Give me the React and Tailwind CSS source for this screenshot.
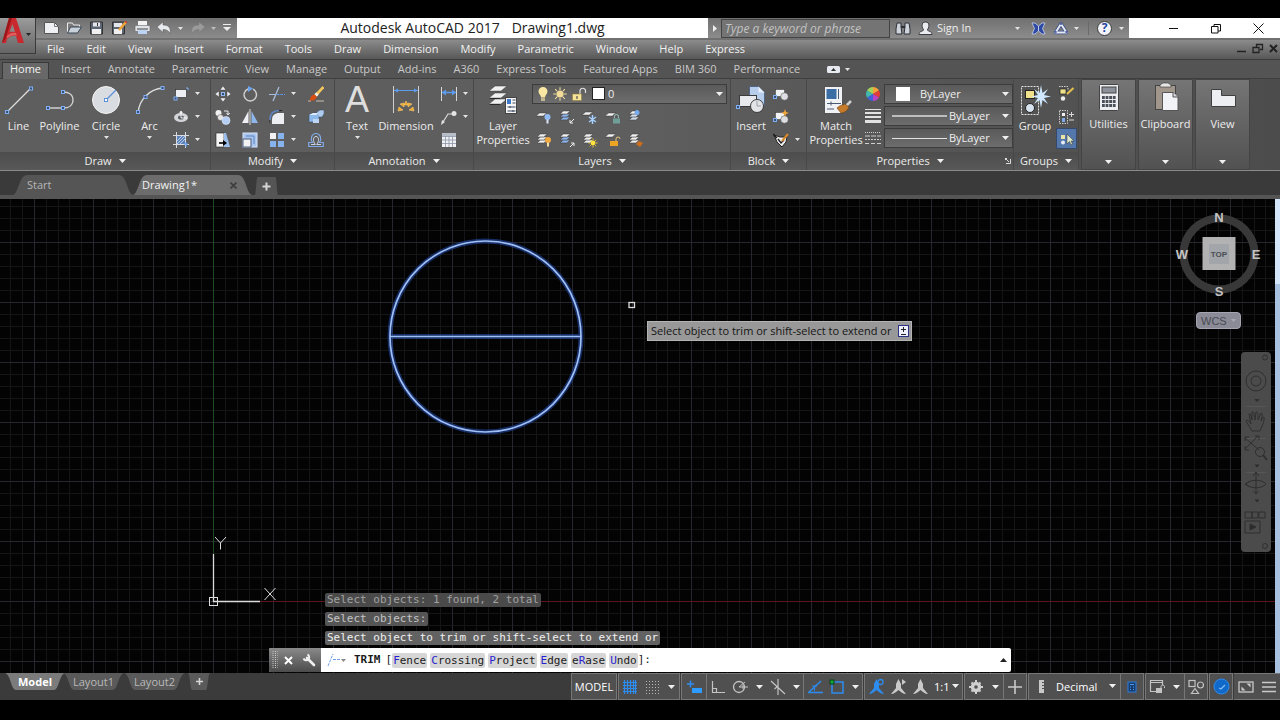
import React from 'react';

const MENUS = ['File', 'Edit', 'View', 'Insert', 'Format', 'Tools', 'Draw', 'Dimension', 'Modify', 'Parametric', 'Window', 'Help', 'Express'];
const RIBBON_TABS = ['Insert', 'Annotate', 'Parametric', 'View', 'Manage', 'Output', 'Add-ins', 'A360', 'Express Tools', 'Featured Apps', 'BIM 360', 'Performance'];
const HISTORY = [
    { text: 'Select objects: 1 found, 2 total', tone: 'bg-[#4a4a4a] text-[#a2a2a2]' },
    { text: 'Select objects:', tone: 'bg-[#555555] text-[#c4c4c4]' },
    { text: 'Select object to trim or shift-select to extend or', tone: 'bg-[#626262] text-[#f0f0f0]' },
];
const TRIM_OPTIONS = [
    ['', 'F', 'ence'],
    ['', 'C', 'rossing'],
    ['', 'P', 'roject'],
    ['', 'E', 'dge'],
    ['e', 'R', 'ase'],
    ['', 'U', 'ndo'],
];

const Svg = ({ w = 16, h = 16, children, className = '' }) => (
    <svg width={w} height={h} viewBox={`0 0 ${w} ${h}`} fill="none" className={`shrink-0 ${className}`} aria-hidden="true">
        {children}
    </svg>
);

const Caret = ({ className = '', fill = '#f0f0f0' }) => (
    <Svg w={7} h={4} className={className}>
        <path d="M0 0h7L3.5 4z" fill={fill} />
    </Svg>
);

const SmallCaret = ({ className = '', fill = '#e4e4e4' }) => (
    <Svg w={5} h={3} className={className}>
        <path d="M0 0h5L2.5 3z" fill={fill} />
    </Svg>
);

// Blue grip square shown on geometry icons
const Grip = ({ x, y }) => <rect x={x - 1.5} y={y - 1.5} width="3" height="3" fill="#3c4f6e" stroke="#7fb0f5" />;

// One sheet of the layer stack
const Sheet = ({ x = 0, y = 0, s = 1, fill = '#f1f1f1' }) => (
    <path d={`M${x + 4 * s} ${y}h${8 * s}l${-4 * s} ${3.4 * s}h${-8 * s}z`} fill={fill} stroke="#3a3a3a" strokeWidth=".5" />
);

const Stack = ({ fill }) => (
    <>
        <Sheet x={1} y={8} s={0.85} fill={fill} />
        <Sheet x={1} y={5} s={0.85} fill={fill} />
        <Sheet x={1} y={2} s={0.85} />
    </>
);

/* ---- draw ---- */
const LineIcon = () => (
    <Svg w={32} h={32}>
        <path d="M4 28 28 4" stroke="#dcdcdc" strokeWidth="1.3" />
        <Grip x={4} y={28} />
        <Grip x={28} y={4.5} />
    </Svg>
);
const PolylineIcon = () => (
    <Svg w={32} h={32}>
        <path d="M4 24h15c6 0 10-3 10-8s-4-8-10-8" stroke="#d0d0d0" strokeWidth="1.3" />
        <Grip x={4} y={24} />
        <Grip x={19} y={24} />
        <Grip x={19} y={8} />
    </Svg>
);
const CircleIcon = () => (
    <Svg w={32} h={32}>
        <circle cx="16" cy="16" r="13.5" fill="#d9dce1" stroke="#f4f4f4" />
        <path d="M16 16 26 6" stroke="#5b8fd8" strokeWidth="1.2" />
        <rect x="14.5" y="14.5" width="3" height="3" fill="#fff" stroke="#5b8fd8" />
    </Svg>
);
const ArcIcon = () => (
    <Svg w={32} h={32}>
        <path d="M4 29C5 16 15 5 29 4" stroke="#dcdcdc" strokeWidth="1.3" />
        <Grip x={4} y={28} />
        <Grip x={11.5} y={13} />
        <Grip x={28.5} y={4} />
    </Svg>
);
const RectIcon = () => (
    <Svg>
        <rect x="2.5" y="3.5" width="11" height="8" fill="#eceef2" stroke="#222" strokeWidth=".6" />
        <Grip x={2.5} y={12.5} />
        <path d="M13 2h2v2" stroke="#7fb0f5" />
    </Svg>
);
const EllipseIcon = () => (
    <Svg>
        <ellipse cx="8" cy="8.5" rx="7" ry="4.5" fill="#d2d4d8" />
        <ellipse cx="8" cy="8.5" rx="3" ry="2" fill="#55585e" />
        <path d="M8 2v7h6" stroke="#f4f4f4" />
        <circle cx="8" cy="3.5" r="1.5" fill="#eee" />
    </Svg>
);
const HatchIcon = () => (
    <Svg>
        <rect x="3.5" y="3.5" width="9" height="9" fill="#5f83b8" />
        <path d="M3.5 0v16M12.5 0v16M0 3.5h16M0 12.5h16" stroke="#d7dbe2" />
        <path d="M4 9l5-5M4 12l8-8M7 12l5-5" stroke="#cfe0fa" strokeWidth=".8" />
        <path d="M11 12h4M13 10v5" stroke="#5b9bf0" />
    </Svg>
);

/* ---- modify ---- */
const MoveIcon = () => (
    <Svg>
        <path d="M8 0l3 4H5zM8 16l3-4H5zM0 8l4-3v6zM16 8l-4-3v6z" fill="#eef1f5" stroke="#333" strokeWidth=".4" />
        <rect x="6.5" y="6.5" width="3" height="3" fill="#3c4f6e" stroke="#8fb9f5" />
    </Svg>
);
const RotateIcon = () => (
    <Svg>
        <path d="M6 3a6.2 6.2 0 1 0 5 .2" stroke="#cfcfcf" strokeWidth="1.4" />
        <path d="M6 0l5 2.6L6 6z" fill="#6da4ef" />
    </Svg>
);
const TrimIcon = () => (
    <Svg>
        <path d="M4 15 10 1" stroke="#a9bddd" strokeWidth="1.3" />
        <path d="M0 8.5h6" stroke="#a9bddd" />
        <path d="M8 8.500h8" stroke="#5b9bf0" strokeDasharray="2.500 1" />
    </Svg>
);
const EraseIcon = () => (
    <Svg>
        <path d="M0 15h3M8 15h8" stroke="#c9c0ae" />
        <path d="M15.500 1 9 8" stroke="#f2c65d" strokeWidth="2.600" />
        <path d="M9.500 7.500l-2 2" stroke="#f5f0e2" strokeWidth="3.400" />
        <path d="M3.500 9.500l3-1 2.500 2.500-3 3.500H1.500z" fill="#d94f12" />
    </Svg>
);
const CopyIcon = () => (
    <Svg>
        <circle cx="3.500" cy="4" r="3" fill="#f1f1f1" />
        <circle cx="5.500" cy="8.500" r="3" fill="#e3e3e3" stroke="#555" strokeWidth=".5" />
        <circle cx="11" cy="11.500" r="4" fill="#b3cdf3" stroke="#e6effc" strokeWidth=".6" />
        <path d="M9 2h4v3M11.500 4 13 6l1.800-2" stroke="#e9e9e9" />
    </Svg>
);
const MirrorIcon = () => (
    <Svg>
        <path d="M6.500 2v12H0z" fill="#eef0f3" />
        <path d="M9.500 2v12H16z" fill="#8fb6ea" />
        <path d="M8 0v16" stroke="#d9d9d9" />
    </Svg>
);
const FilletIcon = () => (
    <Svg>
        <path d="M3 15V11c0-5 3-7 7-7h5v11z" fill="#eceef1" />
        <path d="M1 11C1 5 4 1.500 10 1.500" stroke="#5f87c4" strokeWidth="1.500" />
        <path d="M0 14v-3M10 1.500h3" stroke="#222" />
    </Svg>
);
const ExplodeIcon = () => (
    <Svg>
        <path d="M1 6l4-2h6v6l-3 3H1z" fill="#8db8ea" stroke="#3a4b66" strokeWidth=".5" />
        <path d="M1 6l4-2h6L8 6z" fill="#dcebfc" />
        <path d="M9 3l3-2h4v4l-2 3h-3" fill="#aecbf0" stroke="#3a4b66" strokeWidth=".5" />
        <path d="M5 10h6v4H5z" fill="#bcd5f5" />
    </Svg>
);
const StretchIcon = () => (
    <Svg>
        <rect x="1" y="1" width="8" height="14" fill="#f4f4f4" stroke="#222" strokeWidth=".6" />
        <path d="M9 1h2l4 14H9z" fill="#9dbfec" />
        <path d="M4 11h5" stroke="#000" strokeWidth="1.600" />
        <path d="M8 8l4 3-4 3z" fill="#000" />
    </Svg>
);
const ScaleIcon = () => (
    <Svg>
        <rect x="1" y="1" width="14" height="14" fill="#a8c5ee" stroke="#d8e6fa" />
        <rect x="1" y="7" width="8" height="8" fill="#f3f3f3" stroke="#4a5f80" />
        <path d="M4 4h8v8" stroke="#5d85bd" />
    </Svg>
);
const ArrayIcon = () => (
    <Svg>
        <rect x="1" y="1" width="6" height="6" fill="#f1f1f1" />
        <rect x="9" y="1" width="6" height="6" fill="#86b3ee" />
        <rect x="1" y="9" width="6" height="6" fill="#86b3ee" />
        <rect x="9" y="9" width="6" height="6" fill="#86b3ee" />
    </Svg>
);
const OffsetIcon = () => (
    <Svg>
        <path d="M.700 14.500V10.500H4.500C2 7 3.500 1.500 8 1.500s6 5.500 3.500 9h3.800v4z" stroke="#7fa9e6" strokeWidth="1.200" />
        <path d="M3 12.500h4.300C4.500 9 5 4.500 8 4.500s3.500 4.500.700 8H13" stroke="#d5e2f5" strokeWidth=".9" />
    </Svg>
);

/* ---- annotation ---- */
const DimensionIcon = () => (
    <Svg w={32} h={32}>
        <path d="M3.500 2v27M28.500 2v27" stroke="#cfcfcf" />
        <path d="M4 6.500h24" stroke="#5b9bf0" />
        <path d="M4 6.500l4-2v4zM28 6.500l-4-2v4z" fill="#5b9bf0" />
        <path d="M8 27l5-1-4-3zM10 20l4 3v-4zM16 17l-2 4h4zM22 20l-4 3v-4zM24 27l-5-1 4-3z" fill="#f0a62a" stroke="#f6cc70" strokeWidth=".6" />
    </Svg>
);
const LinearIcon = () => (
    <Svg>
        <path d="M.5 1v14M15.500 1v14" stroke="#d6d6d6" />
        <path d="M1 6.500h14" stroke="#5b9bf0" strokeWidth="1.500" />
        <path d="M1 6.500l4-3v6zM15 6.500l-4-3v6z" fill="#5b9bf0" />
    </Svg>
);
const LeaderIcon = () => (
    <Svg>
        <circle cx="13" cy="4.500" r="2.500" fill="#e4e4e4" />
        <path d="M11 5H7L2 13" stroke="#d9d9d9" strokeWidth="1.200" />
        <path d="M0 16l1-5 3 2z" fill="#e4e4e4" />
    </Svg>
);
const TableIcon = () => (
    <Svg>
        <rect x="1" y="1" width="14" height="14" fill="#eff1f4" />
        <rect x="1" y="1" width="14" height="3" fill="#b8bec8" />
        <path d="M1 4.500h14M1 8h14M1 11.500h14M4.500 4v11M8 4v11M11.500 4v11" stroke="#8a94a5" strokeWidth=".8" />
    </Svg>
);

/* ---- layers ---- */
const LayerPropsIcon = () => (
    <Svg w={32} h={32}>
        <Sheet x={2} y={15} s={1.5} />
        <Sheet x={2} y={9} s={1.5} />
        <Sheet x={2} y={2} s={1.5} />
        <path d="M3 14.500h10M3 20.500h10" stroke="#1f1f1f" strokeWidth=".8" />
        <rect x="18.500" y="13.500" width="11" height="16" fill="#f5f5f5" stroke="#444" />
        <rect x="20" y="15" width="4" height="5" fill="#3f78c8" />
        <path d="M25.500 16h3M25.500 19h3M20.500 23h8M20.500 27h8M23 22v2M26 26v2" stroke="#39485e" />
    </Svg>
);
const BulbIcon = () => (
    <Svg w={12} h={16}>
        <path d="M6 1a4.500 4.500 0 0 0-4.500 4.500C1.500 8 4 9 4 11.500h4C8 9 10.500 8 10.500 5.500A4.500 4.500 0 0 0 6 1z" fill="#fbe8a2" />
        <rect x="4" y="12" width="4" height="3" fill="#c3b58d" />
    </Svg>
);
const SunIcon = ({ x = 8, y = 8, s = 1, fill = '#f3dc9a' }) => (
    <g transform={`translate(${x} ${y}) scale(${s})`}>
        <circle r="4" fill={fill} />
        <path d="M0-7.500v3M0 4.500v3M-7.500 0h3M4.500 0h3M-5.300-5.300l2 2M5.300 5.300l-2-2M-5.300 5.300l2-2M5.300-5.300l-2 2" stroke={fill} strokeWidth="1.200" />
    </g>
);
const UnlockIcon = ({ body = '#f6e39a' }) => (
    <Svg>
        <path d="M9 8V4.500a2.800 2.800 0 0 1 5.500 0V7" stroke="#e2e2e2" strokeWidth="1.200" />
        <rect x="1.500" y="8" width="9" height="6.500" fill={body} stroke="#8d7a33" strokeWidth=".5" />
        <path d="M6 10v3" stroke="#333" />
    </Svg>
);
const LAYER_TOOLS = [
    [
        <Svg key="off"><Sheet x={0} y={4} s={0.9} /><circle cx="11.500" cy="8" r="3" fill="#8fbcf5" /><rect x="10.500" y="10.500" width="2" height="4" fill="#d9e6f8" /></Svg>,
        <Svg key="iso"><Stack fill="#8db4e8" /><path d="M15 10l-4 4M11 11v3h3" stroke="#eee" /></Svg>,
        <Svg key="frz"><Sheet x={0} y={3} s={0.9} /><path d="M10.500 6v9M7 8l7 5M7 13l7-5" stroke="#a5d0ff" strokeWidth="1.500" /></Svg>,
        <Svg key="lock"><Sheet x={0} y={4} s={0.9} /><rect x="8" y="9.500" width="7" height="5" fill="#6f9f98" /><path d="M9.500 9V7.500a2 2 0 0 1 4 0V9" stroke="#9bc2bc" /></Svg>,
        <Svg key="cur"><Stack fill="#d3dfef" /><circle cx="9" cy="3.500" r="2.500" fill="#77abf0" /></Svg>,
    ],
    [
        <Svg key="on"><Stack /><circle cx="12" cy="8" r="3" fill="#f2a93b" /><rect x="11" y="10.500" width="2" height="4" fill="#f4dca8" /></Svg>,
        <Svg key="uniso"><Stack fill="#8db4e8" /><path d="M11 15l4-4M12 11h3v3" stroke="#eee" /></Svg>,
        <Svg key="thaw"><Stack /><SunIcon x={11} y={11} s={0.62} fill="#ffe03c" /></Svg>,
        <Svg key="unlock"><Sheet x={0} y={2} s={0.9} /><rect x="5" y="9" width="8" height="5" fill="#eda324" /><path d="M11 9V7a2 2 0 0 1 4 0" stroke="#e9c67e" /></Svg>,
        <Svg key="match"><Stack /><path d="M8 12l3-3 4 2-3 4z" fill="#cc6d1e" /></Svg>,
    ],
];

/* ---- block ---- */
const InsertIcon = () => (
    <Svg w={32} h={32}>
        <path d="M14.500 2.500h9l6 6v13h-15z" fill="#b7cdec" stroke="#4f6684" />
        <path d="M23.500 2.500v6h6z" fill="#e8f0fb" />
        <rect x="4.500" y="11.500" width="17" height="11" fill="#e7e9ed" stroke="#3b3b3b" />
        <circle cx="22" cy="22" r="6.500" fill="#e2e4e8" stroke="#3b3b3b" />
        <path d="M22 17v5h4" stroke="#9aa0a8" />
        <Grip x={3} y={23} />
    </Svg>
);
const BlockCreateIcon = ({ spark }) => (
    <Svg>
        <rect x="2.500" y="3.500" width="9" height="7" fill="#f1f2f4" stroke="#333" strokeWidth=".5" />
        <circle cx="11.500" cy="10.500" r="3.800" fill="#dcdee2" stroke="#444" strokeWidth=".5" />
        <Grip x={2} y={11} />
        {spark && <path d="M12 0l1 3 3 1-3 1-1 3-1-3-3-1 3-1z" fill="#f5a83a" />}
    </Svg>
);
const AttrIcon = () => (
    <Svg>
        <path d="M1 3l6 2h7l-1 5-4 5-5-5z" fill="#efefef" stroke="#222" />
        <path d="M0 2l4 4M5 7l3 4 3-3" stroke="#1e1e1e" strokeWidth="1.400" />
        <path d="M15 2 9 9" stroke="#d88a2b" strokeWidth="2" />
    </Svg>
);

/* ---- properties ---- */
const MatchIcon = () => (
    <Svg w={32} h={32}>
        <rect x="4.500" y="2.500" width="18" height="27" fill="#f0f2f5" stroke="#555" />
        <rect x="6.500" y="5" width="10" height="10" fill="#3b6ea5" />
        <path d="M18.500 5v10M7 19.500h14M7 25h7M11 17.500v4" stroke="#4b5a6e" />
        <path d="M31 17l-5 5" stroke="#cfcfcf" strokeWidth="2.500" />
        <path d="M17 24c3-3 6-3 8-4l4 3c-2 4-5 6-8 6z" fill="#c67b2a" stroke="#6e3f0f" strokeWidth=".6" />
    </Svg>
);
const WheelIcon = () => (
    <Svg>
        <path d="M8 8V1a7 7 0 0 1 6 3.500z" fill="#f7a13a" />
        <path d="M8 8l6-3.500A7 7 0 0 1 14 11.500z" fill="#e33f38" />
        <path d="M8 8l6 3.500A7 7 0 0 1 8 15z" fill="#b744c4" />
        <path d="M8 8v7a7 7 0 0 1-6-3.500z" fill="#3f62d9" />
        <path d="M8 8l-6 3.500A7 7 0 0 1 2 4.500z" fill="#3fb8b0" />
        <path d="M8 8 2 4.500A7 7 0 0 1 8 1z" fill="#9fd35b" />
    </Svg>
);
const WeightIcon = () => (
    <Svg>
        <path d="M0 1.500h16" stroke="#e2e2e2" />
        <path d="M0 5h16" stroke="#e2e2e2" strokeWidth="2" />
        <path d="M0 9h16" stroke="#e2e2e2" strokeWidth="2" />
        <path d="M0 13.500h16" stroke="#e2e2e2" strokeWidth="3" />
    </Svg>
);
const LinetypeIcon = () => (
    <Svg>
        <path d="M0 2.500h16" stroke="#cfcfcf" strokeDasharray="1 1" />
        <path d="M0 6h16" stroke="#cfcfcf" strokeDasharray="5 1" />
        <path d="M0 9.500h16" stroke="#cfcfcf" strokeDasharray="2 1" />
        <path d="M0 13.500h16" stroke="#cfcfcf" strokeDasharray="4 2" />
    </Svg>
);

/* ---- groups and collapsed panels ---- */
const GroupIcon = () => (
    <Svg w={32} h={32}>
        <rect x="2.500" y="2.500" width="17" height="28" stroke="#e3e3e3" strokeDasharray="2 1" />
        <rect x="6.500" y="6.500" width="9" height="8" fill="#efe08c" stroke="#222" />
        <circle cx="11" cy="24" r="4.500" fill="#d7e3ee" stroke="#222" />
        <path d="M22 1l1.500 8L29 5l-4 6 7 1.500-7 1.500 4 6-5.500-4L22 24l-1.500-8-5.500 4 4-6-7-1.500 7-1.500-4-6 5.500 4z" fill="#cfe8ff" />
    </Svg>
);
const UngroupIcon = () => (
    <Svg>
        <rect x="1" y="3" width="6" height="5" fill="#efe08c" stroke="#222" strokeWidth=".7" />
        <circle cx="4" cy="12.500" r="2.200" fill="#eee" />
        <path d="M0 .5h9M9 2v2" stroke="#ccc" strokeDasharray="1.500 1" />
        <path d="M14.500 2 8 8" stroke="#e5c24c" strokeWidth="2" />
    </Svg>
);
const GroupEditIcon = () => (
    <Svg>
        <rect x=".5" y="1.500" width="8" height="13" stroke="#ccc" strokeDasharray="1.500 1" />
        <rect x="3" y="4" width="3" height="3" fill="#f2f2f2" />
        <rect x="3" y="9" width="3" height="4" fill="#7fa9e6" />
        <path d="M10 5.500h5M12.500 3v5M10 11h5" stroke="#d8d8d8" />
    </Svg>
);
const GroupSelectIcon = () => (
    <Svg>
        <rect x="2" y="4" width="4" height="4" fill="#e9e3a8" />
        <circle cx="4" cy="11.500" r="2" fill="#e7edf5" />
        <path d="M8 3v10l2.500-2.500L12 14l1.500-1-1.500-3h3z" fill="#dfe9c8" stroke="#333" strokeWidth=".5" />
    </Svg>
);
const CalculatorIcon = () => (
    <Svg w={32} h={32}>
        <rect x="6.500" y="2.500" width="19" height="26" rx="1" fill="#eceef1" stroke="#444" />
        <rect x="9" y="5" width="14" height="6" fill="#8c919b" stroke="#454545" />
        {[14, 18, 22].map((y) => [9, 12.6, 16.2, 19.8].map((x) => <rect key={`${x}-${y}`} x={x} y={y} width="2.800" height="3" fill="#4b4f57" />))}
    </Svg>
);
const ClipboardIcon = () => (
    <Svg w={32} h={32}>
        <rect x="5.500" y="3.500" width="20" height="24" fill="#a0968b" stroke="#444" />
        <path d="M10 5V3l3-2h5l3 2v2z" fill="#e6e6e6" stroke="#444" strokeWidth=".7" />
        <path d="M12.500 10.500h11l4.500 4.500v13.500H12.500z" fill="#f2f3f6" stroke="#555" />
        <path d="M23 10v5h5" stroke="#555" fill="#d7d9de" />
    </Svg>
);
const ViewportIcon = () => (
    <Svg w={32} h={32}>
        <path d="M4.500 7.500h10v6h14v11h-24z" fill="#eceef2" stroke="#3f3f3f" />
    </Svg>
);

const BigButton = ({ icon, lines, caret, className }) => (
    <button className={`flex flex-col items-center pt-[2px] leading-[14px] ${className}`}>
        {icon}
        <span className="pt-[3px]">
            {lines.map((l) => (
                <span key={l} className="block whitespace-nowrap">{l}</span>
            ))}
        </span>
        {caret && <SmallCaret className="mt-[3px]" />}
    </button>
);

const Tool = ({ label, icon, caret, active, className = '' }) => (
    <button aria-label={label} className={`flex items-center gap-[6px] ${active ? 'h-[21px] bg-[#5478ab] outline outline-1 -outline-offset-1 outline-[#34496b]' : 'h-[23px]'} ${className}`}>
        {icon}
        {caret && <SmallCaret />}
    </button>
);

const Panel = ({ title, className = '', children, launcher }) => (
    <section className={`flex shrink-0 flex-col border-r border-[#484848] ${className}`}>
        <div className="flex h-[73px] items-start pt-[3px]">{children}</div>
        <div className="relative flex h-[18px] items-center justify-center gap-[7px] bg-gradient-to-b from-[#4d4d4d] to-[#585858]">
            <h2>{title}</h2>
            <Caret />
            {launcher && (
                <button aria-label="Properties palette" className="absolute right-[2px] top-[6px]">
                    <Svg w={6} h={6}>
                        <path d="M0 .5h2M.5 0v2M1 1l3 3M5.500 1v4.500H1" stroke="#ddd" />
                    </Svg>
                </button>
            )}
        </div>
    </section>
);

const CollapsedPanel = ({ icon, title }) => (
    <button className="ml-[2px] flex w-[55px] shrink-0 flex-col items-center border border-[#444] bg-gradient-to-b from-[#757575] to-[#525252] pt-[2px]">
        {icon}
        <span className="leading-[20px]">{title}</span>
        <Caret className="mt-auto mb-[5px]" />
    </button>
);

const Combo = ({ label, value, children, className = '', selectClass = '' }) => (
    <div className={`relative h-[20px] border border-[#3c3c3c] bg-gradient-to-b from-[#5a5a5a] to-[#6d6d6d] ${className}`}>
        <div className="pointer-events-none absolute inset-y-0 left-0 flex items-center">{children}</div>
        <select aria-label={label} className={`block h-[18px] w-full appearance-none bg-transparent text-[#eeeeee] outline-none ${selectClass}`}>
            <option>{value}</option>
        </select>
        <Caret className="pointer-events-none absolute right-[3px] top-[7px]" />
    </div>
);

const TitleBar = () => (
    <div className="flex h-[20px] items-stretch bg-white">
        <div className="flex w-[237px] shrink-0 items-center bg-gradient-to-b from-[#6f6f6f] to-[#8c8c8c] pl-[43px]">
            <button aria-label="New" className="mr-[6px]">
                <Svg w={17} h={14}><path d="M1.500 1.500h10l4 4v7h-14z" fill="#eef0f4" stroke="#555" /><path d="M11.500 1.500v4h4" stroke="#777" /></Svg>
            </button>
            <button aria-label="Open" className="mr-[6px]">
                <Svg w={17} h={14}><path d="M1.500 11V2h5l1 2h6v2" stroke="#eaeaea" /><path d="M1.500 12l3-6h11l-4 6z" fill="#c8d0da" stroke="#3b4656" /></Svg>
            </button>
            <button aria-label="Save" className="mr-[7px]">
                <Svg w={15} h={14}><path d="M1.500 1h12v12h-12z" fill="#5b6573" stroke="#333" /><rect x="4" y="1.500" width="7" height="4" fill="#e5e7eb" /><rect x="3" y="8" width="9" height="5" fill="#f0f0f0" /><path d="M8.500 2v3" stroke="#333" /></Svg>
            </button>
            <button aria-label="Save As" className="mr-[6px]">
                <Svg w={17} h={14}><path d="M1.500 1h12v12h-12z" fill="#5b6573" stroke="#333" /><rect x="3" y="2" width="8" height="4" fill="#e5e7eb" /><rect x="3" y="8" width="8" height="5" fill="#f0f0f0" /><path d="M15 1 8 9" stroke="#f0a53a" strokeWidth="2.500" /><path d="M15.500.5l-1 1" stroke="#c43c2b" strokeWidth="2.500" /></Svg>
            </button>
            <button aria-label="Plot" className="mr-[6px]">
                <Svg w={17} h={14}><rect x="4" y="0" width="9" height="5" fill="#f3f3f3" /><rect x="1" y="4.500" width="15" height="6" rx="1" fill="#dfe2e7" stroke="#666" strokeWidth=".6" /><path d="M3 8h11" stroke="#444" /><rect x="4" y="9" width="9" height="4" fill="#bcd3f4" /></Svg>
            </button>
            <button aria-label="Undo" className="flex items-center gap-[6px]">
                <Svg w={15} h={13}><path d="M0 5l6-5v3c6 0 8 3 7 9-1-3-3-4.500-7-4.500v3z" fill="#e6e9ee" stroke="#555" strokeWidth=".5" /></Svg>
                <SmallCaret />
            </button>
            <button aria-label="Redo" className="ml-[7px] flex items-center gap-[6px]">
                <Svg w={15} h={13}><path d="M15 5 9 0v3C3 3 1 6 2 12c1-3 3-4.500 7-4.500v3z" fill="#9b9b9b" stroke="#777" strokeWidth=".5" /></Svg>
                <SmallCaret fill="#bcbcbc" />
            </button>
            <button aria-label="Customize quick access" className="ml-[7px]">
                <Svg w={8} h={8}><path d="M0 .5h8" stroke="#eee" /><path d="M0 3h8L4 7z" fill="#eee" /></Svg>
            </button>
        </div>
        <h1 className="flex flex-1 items-center justify-center gap-3 whitespace-nowrap text-[14px] text-[#222]">
            <span>Autodesk AutoCAD 2017</span>
            <span>Drawing1.dwg</span>
        </h1>
        <div className="flex w-[421px] shrink-0 items-center bg-gradient-to-b from-[#707070] to-[#8c8c8c]">
            <button aria-label="Collapse search" className="flex w-[13px] justify-center">
                <Svg w={4} h={7}><path d="M0 0l4 3.500L0 7z" fill="#eee" /></Svg>
            </button>
            <input aria-label="Search" placeholder="Type a keyword or phrase" className="h-[19px] w-[169px] border border-[#444] bg-[#747474] px-[3px] text-[12px] leading-[17px] italic text-white outline-none placeholder:text-[#c2c2c2]" />
            <button aria-label="Search" className="flex w-[26px] justify-center">
                <Svg w={16} h={15}><path d="M2 2h4v4l1 7H1l0-5zM10 2h4l1 6v5H9l1-7z" fill="#cfd4dc" stroke="#2b2f36" /><path d="M6 6h4" stroke="#2b2f36" strokeWidth="2" /></Svg>
            </button>
            <button className="flex items-center gap-[4px] pl-[2px] text-[#eee]">
                <Svg w={15} h={15}><path d="M7.500 1c5 0 3.500 6 1.800 8 1 1.500 4.700 1 4.700 4.500H1C1 10 4.700 10.500 5.700 9 4 7 2.500 1 7.500 1z" fill="#e9ebef" stroke="#3a3d42" /></Svg>
                <span>Sign In</span>
            </button>
            <SmallCaret className="ml-auto" />
            <button aria-label="Exchange apps" className="ml-[11px]">
                <Svg w={15} h={13}><path d="M1 1h3l3.500 3v5L4 12H1l2.500-5.500zM14 1h-3L7.500 4v5l3.500 3h3l-2.500-5.500z" fill="#2e4aa5" stroke="#c9d2ec" strokeWidth=".8" /></Svg>
            </button>
            <button aria-label="A360" className="ml-[7px] flex items-center gap-[5px]">
                <Svg w={16} h={14}><path d="M8 3 2.500 11.500h11z" stroke="#3d4f86" strokeWidth="3.500" strokeLinejoin="round" /><path d="M8 3 2.500 11.500h11z" stroke="#e4e9f4" strokeWidth="2" strokeLinejoin="round" /><circle cx="8" cy="3" r="1" fill="#3b57a8" /><circle cx="2.800" cy="11" r="1" fill="#3b57a8" /><circle cx="13.200" cy="11" r="1" fill="#3b57a8" /></Svg>
                <SmallCaret />
            </button>
            <span className="ml-[9px] h-[14px] w-px bg-[#6a6a6a]" />
            <button aria-label="Help" className="ml-[8px] mr-[5px] flex items-center gap-[7px]">
                <span className="flex size-[15px] items-center justify-center rounded-full border border-[#3a3a3a] bg-[#f1f3f8] text-[12px] font-bold text-[#2445a5]">?</span>
                <SmallCaret />
            </button>
        </div>
        <div className="flex w-[151px] shrink-0 items-center justify-between pl-[39px] pr-[16px]">
            <button aria-label="Minimize"><Svg w={11} h={11}><path d="M1 5.500h9" stroke="#111" /></Svg></button>
            <button aria-label="Restore"><Svg w={11} h={11}><path d="M.5 3.500h6.500v6.500H.5zM3 3.500v-2h6.500V8H7" stroke="#111" /></Svg></button>
            <button aria-label="Close"><Svg w={11} h={11}><path d="M.5.5l10 10M10.500.5l-10 10" stroke="#111" /></Svg></button>
        </div>
    </div>
);

const MenuBar = () => (
    <nav className="mt-[2px] flex h-[20px] items-center gap-[22px] border-b border-[#3c3c3c] bg-gradient-to-b from-[#8c8c8c] to-[#585858] pl-[47px] pb-[2px] text-[#f2f2f2]">
        {MENUS.map((m) => (
            <button key={m}>{m}</button>
        ))}
        <div className="ml-auto flex items-center gap-[5px] pr-[2px]">
            <button aria-label="Minimize drawing"><Svg w={10} h={11}><path d="M0 8.500h9" stroke="#222" strokeWidth="1.500" /></Svg></button>
            <button aria-label="Restore drawing"><Svg w={12} h={11}><path d="M1 4.500h6v5H1zM4.500 4V1.500h6v5H8" stroke="#222" strokeWidth="1.300" /></Svg></button>
            <button aria-label="Close drawing"><Svg w={9} h={11}><path d="M1 2l7 7M8 2 1 9" stroke="#222" strokeWidth="2" /></Svg></button>
        </div>
    </nav>
);

const RibbonTabs = () => (
    <div role="tablist" className="flex h-[19px] items-center border-b border-[#3e3e3e] bg-[#545454] text-[#c9c9c9]">
        <button role="tab" aria-selected="true" className="ml-[2px] mt-[2px] flex h-[17px] w-[47px] items-center justify-center border border-b-0 border-[#3a3a3a] bg-[#686868] pb-[3px] text-[#f4f4f4]">Home</button>
        <div className="flex gap-[17px] pl-[12px]">
            {RIBBON_TABS.map((t) => (
                <button key={t} role="tab" aria-selected="false">{t}</button>
            ))}
        </div>
        <button aria-label="Ribbon display" className="ml-[27px] flex items-center gap-[5px]">
            <Svg w={13} h={7}><rect width="13" height="7" rx="1.500" fill="#e8eaf2" /><path d="M6.500 2l2.500 3H4z" fill="#333" /></Svg>
            <SmallCaret />
        </button>
    </div>
);

const Ribbon = () => (
    <div className="flex bg-gradient-to-r from-[#5e5e5e] via-[#5e5e5e] to-[#4c4c4c] text-[#ececec]">
        <Panel title="Draw" className="w-[211px]">
            <BigButton icon={<LineIcon />} lines={['Line']} className="w-[37px]" />
            <BigButton icon={<PolylineIcon />} lines={['Polyline']} className="w-[45px]" />
            <BigButton icon={<CircleIcon />} lines={['Circle']} caret className="w-[48px]" />
            <BigButton icon={<ArcIcon />} lines={['Arc']} caret className="w-[39px]" />
            <div className="flex flex-col pl-[4px]">
                <Tool label="Rectangle" icon={<RectIcon />} caret />
                <Tool label="Ellipse" icon={<EllipseIcon />} caret />
                <Tool label="Hatch" icon={<HatchIcon />} caret />
            </div>
        </Panel>
        <Panel title="Modify" className="w-[124px]">
            <div className="grid grid-cols-[27px_27px_39px_20px] pl-[4px]">
                <Tool label="Move" icon={<MoveIcon />} />
                <Tool label="Rotate" icon={<RotateIcon />} />
                <Tool label="Trim" icon={<TrimIcon />} caret />
                <Tool label="Erase" icon={<EraseIcon />} />
                <Tool label="Copy" icon={<CopyIcon />} />
                <Tool label="Mirror" icon={<MirrorIcon />} />
                <Tool label="Fillet" icon={<FilletIcon />} caret />
                <Tool label="Explode" icon={<ExplodeIcon />} />
                <Tool label="Stretch" icon={<StretchIcon />} />
                <Tool label="Scale" icon={<ScaleIcon />} />
                <Tool label="Array" icon={<ArrayIcon />} caret />
                <Tool label="Offset" icon={<OffsetIcon />} />
            </div>
        </Panel>
        <Panel title="Annotation" className="w-[139px]">
            <BigButton
                icon={<span className="flex h-[32px] items-center font-['Liberation_Sans',sans-serif] text-[36px] leading-none text-[#dedede]">A</span>}
                lines={['Text']}
                caret
                className="w-[44px]"
            />
            <BigButton icon={<DimensionIcon />} lines={['Dimension']} className="w-[54px]" />
            <div className="flex flex-col pl-[8px]">
                <Tool label="Linear" icon={<LinearIcon />} caret />
                <Tool label="Leader" icon={<LeaderIcon />} caret />
                <Tool label="Table" icon={<TableIcon />} />
            </div>
        </Panel>
        <Panel title="Layers" className="w-[257px]">
            <BigButton icon={<LayerPropsIcon />} lines={['Layer', 'Properties']} className="w-[58px]" />
            <div className="flex flex-col">
                <div className="flex h-[23px] items-center">
                    <Combo label="Layer" value="0" className="w-[195px]" selectClass="pl-[75px]">
                        <span className="flex items-center gap-[3px] pl-[4px]">
                            <BulbIcon />
                            <Svg><SunIcon s={0.9} /></Svg>
                            <UnlockIcon />
                            <span className="ml-[2px] size-[13px] border border-[#222] bg-white" />
                        </span>
                    </Combo>
                </div>
                {LAYER_TOOLS.map((row, i) => (
                    <div key={i} className="flex h-[23px] items-center gap-[7px] pl-[4px]">
                        {row.map((icon) => (
                            <button key={icon.key} aria-label={`Layer ${icon.key}`}>{icon}</button>
                        ))}
                    </div>
                ))}
            </div>
        </Panel>
        <Panel title="Block" className="w-[76px]">
            <BigButton icon={<InsertIcon />} lines={['Insert']} className="w-[40px]" />
            <div className="flex flex-col pl-[2px]">
                <Tool label="Create block" icon={<BlockCreateIcon />} />
                <Tool label="Edit block" icon={<BlockCreateIcon spark />} />
                <Tool label="Edit attributes" icon={<AttrIcon />} caret />
            </div>
        </Panel>
        <Panel title="Properties" className="w-[207px]" launcher>
            <BigButton icon={<MatchIcon />} lines={['Match', 'Properties']} className="w-[58px]" />
            <div className="flex flex-col pt-px">
                <div className="flex h-[22px] items-center gap-[3px]">
                    <WheelIcon />
                    <Combo label="Object color" value="ByLayer" className="w-[129px]" selectClass="pl-[35px]">
                        <span className="ml-[11px] size-[14px] bg-white" />
                    </Combo>
                </div>
                <div className="flex h-[22px] items-center gap-[3px]">
                    <WeightIcon />
                    <Combo label="Lineweight" value="ByLayer" className="w-[129px]" selectClass="pl-[64px]">
                        <span className="ml-[7px] h-[2px] w-[55px] bg-[#bdbdbd]" />
                    </Combo>
                </div>
                <div className="flex h-[22px] items-center gap-[3px]">
                    <LinetypeIcon />
                    <Combo label="Linetype" value="ByLayer" className="w-[129px]" selectClass="pl-[64px]">
                        <span className="ml-[7px] h-px w-[55px] bg-[#e2e2e2]" />
                    </Combo>
                </div>
            </div>
        </Panel>
        <Panel title="Groups" className="w-[65px]">
            <BigButton icon={<GroupIcon />} lines={['Group']} className="w-[42px]" />
            <div className="flex flex-col">
                <Tool label="Ungroup" icon={<UngroupIcon />} className="pl-[3px]" />
                <Tool label="Group edit" icon={<GroupEditIcon />} className="pl-[3px]" />
                <Tool label="Group selection" icon={<GroupSelectIcon />} active className="w-[21px] pl-[3px]" />
            </div>
        </Panel>
        <CollapsedPanel icon={<CalculatorIcon />} title="Utilities" />
        <CollapsedPanel icon={<ClipboardIcon />} title="Clipboard" />
        <CollapsedPanel icon={<ViewportIcon />} title="View" />
    </div>
);

// Background of a document tab, slanted on both sides
const TabShape = ({ fill }) => (
    <svg viewBox="0 0 120 20" preserveAspectRatio="none" className="absolute inset-0 -z-10 h-full w-full" aria-hidden="true">
        <path d="M0 20C6 18 6 0 14 0H106C114 0 114 18 120 20z" fill={fill} />
    </svg>
);

const FileTabs = () => (
    <div className="flex h-[29px] items-end border-t border-[#8a8a8a] border-b-[4px] border-b-[#555] bg-[#3a3a3a] pl-[13px]">
        <button className="relative isolate flex h-[20px] w-[120px] items-center pl-[14px] text-[#b5b5b5]">
            <TabShape fill="#555555" />
            Start
        </button>
        <div className="relative isolate flex h-[20px] w-[119px] items-center pl-[9px] text-[#f2f2f2]">
            <TabShape fill="#6c6c6c" />
            <button>Drawing1*</button>
            <button aria-label="Close Drawing1" className="ml-auto mr-[15px]">
                <Svg w={7} h={7}><path d="M.5.5l6 6M6.500.5l-6 6" stroke="#3d3d3d" strokeWidth="1.600" /></Svg>
            </button>
        </div>
        <button aria-label="New drawing" className="relative isolate ml-[3px] flex h-[18px] w-[23px] items-center justify-center">
            <TabShape fill="#555555" />
            <Svg w={9} h={9}><path d="M4.500.5v8M.5 4.500h8" stroke="#d6d6d6" strokeWidth="2" /></Svg>
        </button>
    </div>
);

const ORIGIN = { x: 213, y: 402 };
const STEP = 11.96;
const range = (from, to) => Array.from({ length: to - from + 1 }, (_, i) => from + i);

const DrawingArea = () => (
    <svg className="absolute inset-0 h-full w-full" role="img" aria-label="Model space">
        <g shapeRendering="crispEdges">
            {[false, true].map((major) => (
                <React.Fragment key={String(major)}>
                    {range(-17, 200).filter((n) => (n % 5 === 0) === major).map((n) => {
                        const x = Math.round(ORIGIN.x + n * STEP);
                        return <rect key={n} x={x} y="0" width="1" height="100%" fill={major ? '#26262e' : '#151518'} />;
                    })}
                    {range(-60, 33).filter((n) => (n % 5 === 0) === major).map((n) => {
                        const y = Math.round(ORIGIN.y - n * STEP);
                        return <rect key={n} x="0" y={y} width="100%" height="1" fill={major ? '#26262e' : '#151518'} />;
                    })}
                </React.Fragment>
            ))}
            <rect x="213" y="0" width="1" height="355" fill="#1f4a22" />
            <rect x="260" y="402" width="100%" height="1" fill="#5c1518" />
        </g>
        <g stroke="#2450b4" strokeWidth="5" opacity=".55">
            <circle cx="485.500" cy="137.500" r="95.500" fill="none" />
            <path d="M390 137.500h191" />
        </g>
        <g stroke="#a0bff5" strokeWidth="1.700">
            <circle cx="485.500" cy="137.500" r="95.500" fill="none" />
            <path d="M390 137.500h191" />
        </g>
        <g stroke="#dcdcdc" fill="none">
            <rect x="209.500" y="398.500" width="8" height="8" />
            <path d="M213.500 355v48M213 402.500h47" strokeWidth="1.300" />
            <path d="M215 338l5.500 6 5.500-6M220.500 344v6.500M264.500 389l11 12M275.500 389l-11 12" />
            <rect x="629" y="103.500" width="5.500" height="5" strokeWidth="1.300" />
        </g>
    </svg>
);

const ViewCube = () => (
    <svg width="92" height="92" viewBox="0 0 92 92" className="absolute right-[10px] top-[9px] font-['Liberation_Sans',sans-serif]" aria-label="View cube">
        <circle cx="46" cy="46" r="35.500" fill="none" stroke="#383838" strokeWidth="8" />
        <rect x="29.500" y="29" width="33" height="33" fill="#b2b2b2" />
        <rect x="36" y="36" width="20" height="20" fill="#a2a5a9" />
        <g textAnchor="middle" fill="#c4c4c4" fontWeight="bold" fontSize="13">
            <text x="46" y="14">N</text>
            <text x="46" y="88">S</text>
            <text x="9" y="51">W</text>
            <text x="83" y="51">E</text>
            <text x="46" y="49" fontSize="8" fill="#4a4d52">TOP</text>
        </g>
    </svg>
);

const NavBar = () => (
    <div className="absolute right-[4px] top-[153px] flex h-[200px] w-[30px] flex-col items-center justify-between rounded-[4px] bg-[#4b4b4b] py-[2px]">
        <svg width="28" height="196" viewBox="0 0 28 196" fill="none" stroke="#2f2f2f" aria-hidden="true">
            <circle cx="23" cy="3.500" r="2.500" />
            <circle cx="14" cy="27" r="10" />
            <circle cx="14" cy="27" r="5" />
            <path d="M13 45.500h4l-2 2zM13 111h4l-2 2zM13 146h4l-2 2z" fill="#2c2c2c" />
            <path d="M4 52.500h20M4 84.500h20M4 118.500h20" stroke="#565656" />
            <path d="M10 77 4 67c1-2 3 0 5 3L7 60c2-1 2 2 3 6l0-8c2-1 2 2 3 8l1-8c2-1 2 2 2 8l3-7c2 0 1 3 0 8l2-4c2 0 1 3 0 7l-3 7z" />
            <path d="M3 84l14 12M16 82 3 95M3 87v-4h4M13 82h4v4M3 92v4h4" />
            <circle cx="18" cy="98" r="4.500" />
            <path d="M21 101l4 5" strokeWidth="2" />
            <path d="M14 119v20M11 122l3-4 3 4M4 130c4 5 16 5 20 0-4-5-16-5-20 0zM7 133l-4-3 4-2M11 137l3 3 3-3" />
            <path d="M3 158h7v6H3zM10 158h6v6h-6zM17 158h6v6h-6zM3 167h15v12H3z" />
            <path d="M8 170l6 3-6 3z" fill="#2c2c2c" />
            <circle cx="23" cy="192" r="2.500" />
        </svg>
    </div>
);

const CommandLine = () => (
    <div className="absolute left-[269px] right-[264px] bottom-[1px] font-['DejaVu_Sans_Mono',monospace] text-[11px]">
        <div className="mb-[3px] flex flex-col items-start gap-[5px] pl-[56px]">
            {HISTORY.map((h) => (
                <p key={h.text} className={`h-[14px] rounded-[2px] px-[2px] leading-[14px] whitespace-nowrap ${h.tone}`}>{h.text}</p>
            ))}
        </div>
        <div className="flex h-[24px] items-center overflow-hidden rounded-[2px] bg-white">
            <div className="flex h-full w-[52px] shrink-0 items-center gap-[6px] bg-gradient-to-b from-[#8a8a8a] to-[#4c4c4c] pl-[3px]">
                <Svg w={6} h={18}><path d="M1 0v18M3.500 0v18M6 0v18" stroke="#c9c9c9" strokeDasharray="1 1" /></Svg>
                <button aria-label="Close command line"><Svg w={9} h={9}><path d="M1 1l7 7M8 1 1 8" stroke="#fff" strokeWidth="2" /></Svg></button>
                <button aria-label="Customize command line" className="ml-[3px]">
                    <Svg w={14} h={14}><path d="M5 5l7 7" stroke="#f0f0f0" strokeWidth="2.600" strokeLinecap="round" /><path d="M1.500 5.500a3 3 0 1 0 4-4" stroke="#f0f0f0" strokeWidth="2" /></Svg>
                </button>
            </div>
            <button aria-label="Recent commands" className="flex w-[33px] shrink-0 items-center pl-[6px]">
                <Svg w={14} h={14}><path d="M1 13 6 1M6 6.500h8" stroke="#6c9fe6" strokeDasharray="3 1" /></Svg>
                <SmallCaret fill="#888" />
            </button>
            <div className="flex items-center whitespace-nowrap text-[#1b1b1b]">
                <b>TRIM</b>
                <span className="pl-[5px]">[</span>
                <div className="flex gap-[3px]">
                    {TRIM_OPTIONS.map(([pre, key, post]) => (
                        <button key={key} className="rounded-[2px] bg-[#d6d6d6] px-[1px] leading-[15px]">
                            {pre}<span className="text-[#2a1fd0]">{key}</span>{post}
                        </button>
                    ))}
                </div>
                <span>]:</span>
            </div>
            <input aria-label="Command" className="min-w-0 flex-1 bg-transparent px-1 text-[#1b1b1b] outline-none" />
            <button aria-label="Command history" className="pr-[4px]">
                <Svg w={7} h={4}><path d="M0 4h7L3.500 0z" fill="#222" /></Svg>
            </button>
        </div>
    </div>
);

const Canvas = () => (
    <main className="flex min-h-[474px] flex-1">
        <div className="relative flex-1 overflow-hidden bg-[#030304]">
            <DrawingArea />
            <div className="absolute left-[647px] top-[122px] flex h-[20px] w-[265px] items-center justify-between border border-[#b4b4b4] bg-[#989898] pl-[3px] pr-[2px] whitespace-nowrap text-[11px] text-[#151515]">
                <span>Select object to trim or shift-select to extend or</span>
                <Svg w={11} h={12}><rect x=".5" y=".5" width="10" height="11" fill="#eef0fb" stroke="#2b3184" /><path d="M3 4.500h5M5.500 2v5M3 9.500h5" stroke="#222" /></Svg>
            </div>
            <ViewCube />
            <button className="absolute right-[34px] top-[113px] flex h-[17px] w-[45px] items-center justify-between rounded-[4px] border border-[#a5a5b2] bg-[#8b8b97] px-[4px] font-['Liberation_Sans',sans-serif] text-[11px] text-[#4a4a54]">
                WCS
                <SmallCaret fill="#a9a9b8" />
            </button>
            <NavBar />
            <CommandLine />
        </div>
        <div className="w-[5px] bg-[#a9c1e0]">
            <div className="h-[85px] bg-[#d3e5f9]" />
        </div>
    </main>
);

const LayoutTab = ({ active, children, className }) => (
    <button className={`relative isolate flex h-[17px] items-center justify-center ${active ? 'font-bold text-white' : 'text-[#b9b9b9]'} ${className}`}>
        <svg viewBox="0 0 60 17" preserveAspectRatio="none" className="absolute inset-0 -z-10 h-full w-full" aria-hidden="true">
            <path d="M0 0C6 2 6 17 11 17H49C54 17 54 2 60 0z" fill={active ? '#7b7b7b' : '#5a5a5a'} />
        </svg>
        {children}
    </button>
);

const StatusGroup = ({ children }) => (
    <div className="flex shrink-0 items-stretch border border-[#777] bg-[#505050]">{children}</div>
);

const StatusButton = ({ label, className = 'w-[22px]', children }) => (
    <button aria-label={label} className={`flex shrink-0 items-center justify-center ${className}`}>{children}</button>
);

const DropButton = ({ label, className = 'w-[16px]' }) => (
    <StatusButton label={label} className={className}><Caret /></StatusButton>
);

const Divider = () => <span className="w-px shrink-0 bg-[#777]" />;

const Figure = ({ color = '#c9c9c9', extra }) => (
    <Svg w={17} h={17}>
        <path d="M8.500 1 11 6v4l5 6c-3 0-5-2-7.500-4C6 14 4 16 1 16l5-6V6z" fill={color} />
        {extra}
    </Svg>
);

const StatusBar = () => (
    <footer className="flex h-[27px] items-start justify-between bg-[#3b3b3b]">
        <div className="flex pl-[5px]">
            <LayoutTab active className="w-[60px]">Model</LayoutTab>
            <LayoutTab className="w-[61px] -ml-[2px]">Layout1</LayoutTab>
            <LayoutTab className="w-[61px]">Layout2</LayoutTab>
            <LayoutTab className="ml-[3px] w-[22px]"><Svg w={9} h={9}><path d="M4.500 1v7M1 4.500h7" stroke="#d6d6d6" strokeWidth="1.600" /></Svg></LayoutTab>
        </div>
        <div className="flex h-[27px] gap-px text-white">
            <StatusGroup><button className="w-[44px] text-[11px]">MODEL</button></StatusGroup>
            <StatusGroup>
                <StatusButton label="Grid">
                    <Svg><path d="M2.500 1v14M5.500 1v14M8.500 1v14M11.500 1v14M13.500 1v14M1 3.500h14M1 6.500h14M1 9.500h14M1 12.500h14" stroke="#2d8cf0" strokeWidth="1.200" /></Svg>
                </StatusButton>
                <StatusButton label="Snap">
                    <Svg>{[2.5, 5.5, 8.5, 11.5, 14.5].map((y) => <path key={y} d={`M2 ${y}h13`} stroke="#b5b5b5" strokeDasharray="1 2" />)}</Svg>
                </StatusButton>
                <DropButton label="Snap settings" />
            </StatusGroup>
            <StatusGroup>
                <StatusButton label="Dynamic input" className="w-[24px]">
                    <Svg><path d="M1 5h7M4.500 1.500v7" stroke="#2d8cf0" strokeWidth="1.500" /><rect x="6" y="9" width="10" height="5" fill="#2d9bff" /></Svg>
                </StatusButton>
                <Divider />
                <StatusButton label="Ortho"><Svg w={14} h={14}><path d="M1.500 1v11.500H14M1.500 8.500h4v4" stroke="#c4c4c4" strokeWidth="1.200" /></Svg></StatusButton>
                <StatusButton label="Polar tracking"><Svg><circle cx="7" cy="8" r="5.500" stroke="#c4c4c4" strokeWidth="1.300" /><path d="M7 8h9M7 8l6-5M11 6v4" stroke="#c4c4c4" /></Svg></StatusButton>
                <DropButton label="Polar settings" />
                <StatusButton label="Isometric drafting"><Svg><path d="M1 2l14 13M8 0v16M4.500 10 8 7" stroke="#c4c4c4" strokeWidth="1.200" /></Svg></StatusButton>
                <DropButton label="Isometric settings" className="w-[14px]" />
                <Divider />
                <StatusButton label="Object snap tracking"><Svg w={17} h={16}><path d="M1 13.500h15M2 13 14 2" stroke="#2d8cf0" strokeWidth="1.500" /><path d="M5 7h5M7.500 7v5" stroke="#2d8cf0" /></Svg></StatusButton>
                <StatusButton label="Object snap"><Svg><rect x="3" y="3" width="11" height="11" stroke="#2d8cf0" strokeWidth="1.500" /><rect x="1" y="1" width="4" height="4" fill="#14a83a" stroke="#0b4017" /></Svg></StatusButton>
                <DropButton label="Object snap settings" className="w-[14px]" />
            </StatusGroup>
            <StatusGroup>
                <StatusButton label="Annotation visibility"><Figure color="#2d8cf0" extra={<circle cx="12.500" cy="4" r="2.500" stroke="#2d8cf0" strokeWidth="1.300" />} /></StatusButton>
                <StatusButton label="Auto scale"><Figure extra={<path d="M12 1v6l4-3z" fill="#c9c9c9" />} /></StatusButton>
                <StatusButton label="Annotation scale icon"><Figure /></StatusButton>
                <div className="relative w-[31px]">
                    <select aria-label="Annotation scale" className="h-full w-full appearance-none bg-transparent pl-[3px] text-[11px] outline-none"><option>1:1</option></select>
                    <Caret className="pointer-events-none absolute right-[3px] top-[10px]" />
                </div>
            </StatusGroup>
            <StatusGroup>
                <StatusButton label="Workspace">
                    <Svg w={14} h={14}><circle cx="7" cy="7" r="3.500" stroke="#cfcfcf" strokeWidth="3.400" /><path d="M7 0v3M7 11v3M0 7h3M11 7h3M2.500 2.500l2 2M9.500 9.500l2 2M2.500 11.500l2-2M9.500 4.500l2-2" stroke="#cfcfcf" strokeWidth="2" /></Svg>
                </StatusButton>
                <DropButton label="Workspace settings" />
                <Divider />
                <StatusButton label="Annotation monitor"><Svg w={14} h={14}><path d="M7 0v14M0 7h14" stroke="#c9c9c9" strokeWidth="1.600" /></Svg></StatusButton>
            </StatusGroup>
            <StatusGroup>
                <span className="flex w-[24px] items-center justify-center"><Svg w={5} h={13}><path d="M0 0h5v2H3v1h2v2H3v1h2v2H3v1h2v4H0z" fill="#c9c9c9" /></Svg></span>
                <div className="relative w-[67px]">
                    <select aria-label="Units" className="h-full w-full appearance-none bg-transparent pl-[3px] text-[11px] outline-none"><option>Decimal</option></select>
                    <Caret className="pointer-events-none absolute right-[4px] top-[10px]" />
                </div>
                <Divider />
                <StatusButton label="Quick properties"><Svg w={10} h={12}><rect x="1" y="1" width="8" height="10" fill="#173c6e" stroke="#2d7de0" /><path d="M3 3.500h4M3 6h1M6 6h1M3 8.500h1M6 8.500h1" stroke="#4d9bf5" /></Svg></StatusButton>
            </StatusGroup>
            <StatusGroup>
                <StatusButton label="Lock UI"><Svg><path d="M8 12.500H1.500v-11h12V6M1 3.500h12" stroke="#c4c4c4" strokeWidth="1.200" /><rect x="7" y="9" width="6" height="5" fill="#c4c4c4" /><path d="M12 9V7.500a1.800 1.800 0 0 1 3.500 0V9" stroke="#c4c4c4" /></Svg></StatusButton>
                <DropButton label="Lock settings" className="w-[16px]" />
                <Divider />
                <StatusButton label="Isolate objects"><Svg><rect x="1" y="1.500" width="6" height="6" stroke="#c4c4c4" strokeWidth="1.200" /><circle cx="12.500" cy="6" r="3" stroke="#c4c4c4" strokeWidth="1.200" /><path d="M7 9.500l3.500 5h-7z" stroke="#c4c4c4" strokeWidth="1.200" /></Svg></StatusButton>
            </StatusGroup>
            <StatusGroup>
                <StatusButton label="Graphics performance"><Svg w={17} h={17}><circle cx="8.500" cy="8.500" r="7.500" fill="#1068c8" stroke="#2d8cf0" /><path d="M6 10l2 1 4-4" stroke="#7fbcf5" strokeWidth="1.300" /></Svg></StatusButton>
            </StatusGroup>
            <div className="flex items-stretch border-y border-[#777] bg-[#505050]">
                <StatusButton label="Clean screen" className="w-[24px]"><Svg><rect x="1" y="3" width="14" height="10" stroke="#c9c9c9" strokeWidth="1.300" /><path d="M3.500 11.500v-4l4 4zM12.500 4.500v4l-4-4z" fill="#c9c9c9" /></Svg></StatusButton>
                <StatusButton label="Customization"><Svg w={14} h={12}><path d="M0 1.500h14M0 6h14M0 10.500h14" stroke="#c9c9c9" strokeWidth="1.600" /></Svg></StatusButton>
            </div>
        </div>
    </footer>
);

const App = () => (
    <div className="flex min-h-screen flex-col overflow-x-hidden bg-black pb-[20px] pt-[18px] font-['Open_Sans',sans-serif] text-[11px] leading-[14px]">
        <header className="relative bg-[#707070]">
            <TitleBar />
            <MenuBar />
            <button aria-label="Application menu" className="absolute left-0 top-0 flex h-[36px] w-[36px] items-start border-b border-r border-[#3a3a3a] bg-gradient-to-b from-[#9b9b9b] to-[#666]">
                <Svg w={26} h={27}>
                    <path d="M2 25 9 0h7l8 25h-6l-2-7c-3-1-6 0-9 3l-1 4z" fill="#c9292e" />
                    <path d="M9.500 14l3-8 2.500 8c-2-.5-4-.5-5.500 0z" fill="#8a8a8a" />
                    <path d="M9 0h3L5 22l-3 3z" fill="#9c1519" />
                    <path d="M7 18c3-3 6-3.500 9-3l1 2.500c-4-1-7 0-10 3z" fill="#e25f5f" />
                </Svg>
                <SmallCaret className="mt-[15px]" fill="#222" />
            </button>
        </header>
        <RibbonTabs />
        <Ribbon />
        <FileTabs />
        <Canvas />
        <StatusBar />
    </div>
);

export default App;
